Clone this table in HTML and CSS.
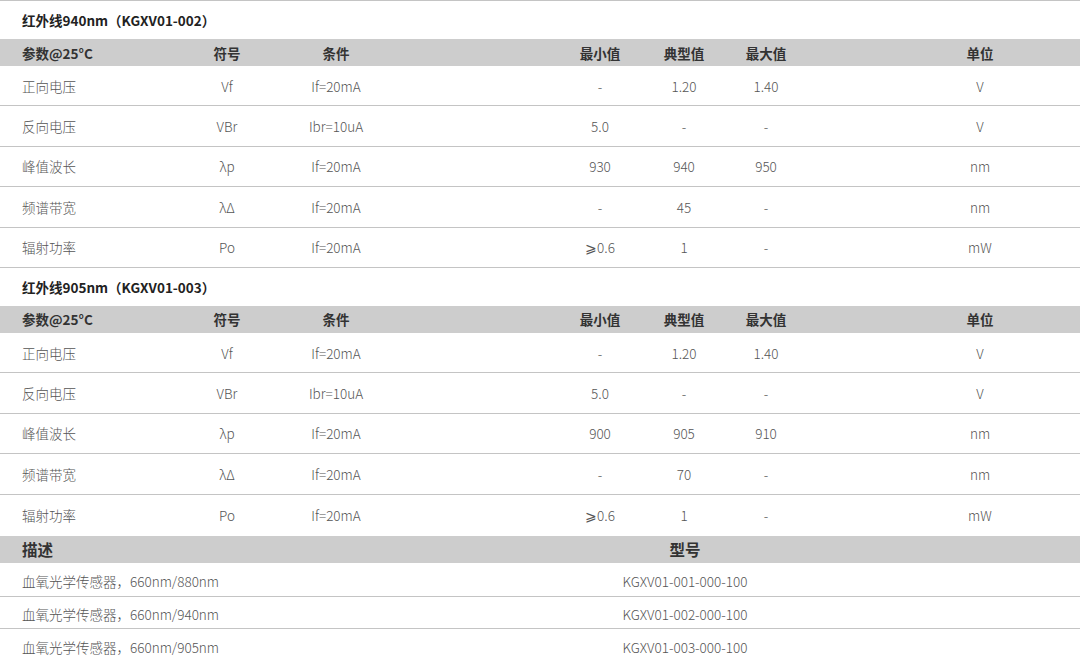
FILE: index.html
```html
<!DOCTYPE html>
<html lang="zh-CN">
<head>
<meta charset="utf-8">
<link rel="stylesheet" href="styles.css">
</head>
<body>
<div class="page">
  <section class="spec">
    <div class="title">红外线940nm（KGXV01-002）</div>
    <div class="grid head">
      <div class="c1">参数@25°C</div><div class="c2">符号</div><div class="c3">条件</div><div class="c4">最小值</div><div class="c5">典型值</div><div class="c6">最大值</div><div class="c7">单位</div>
    </div>
    <div class="grid row">
      <div class="c1">正向电压</div><div class="c2">Vf</div><div class="c3">If=20mA</div><div class="c4">-</div><div class="c5">1.20</div><div class="c6">1.40</div><div class="c7">V</div>
    </div>
    <div class="grid row">
      <div class="c1">反向电压</div><div class="c2">VBr</div><div class="c3">Ibr=10uA</div><div class="c4">5.0</div><div class="c5">-</div><div class="c6">-</div><div class="c7">V</div>
    </div>
    <div class="grid row">
      <div class="c1">峰值波长</div><div class="c2">λp</div><div class="c3">If=20mA</div><div class="c4">930</div><div class="c5">940</div><div class="c6">950</div><div class="c7">nm</div>
    </div>
    <div class="grid row">
      <div class="c1">频谱带宽</div><div class="c2">λΔ</div><div class="c3">If=20mA</div><div class="c4">-</div><div class="c5">45</div><div class="c6">-</div><div class="c7">nm</div>
    </div>
    <div class="grid row">
      <div class="c1">辐射功率</div><div class="c2">Po</div><div class="c3">If=20mA</div><div class="c4">⩾0.6</div><div class="c5">1</div><div class="c6">-</div><div class="c7">mW</div>
    </div>
  </section>
  <section class="spec">
    <div class="title">红外线905nm（KGXV01-003）</div>
    <div class="grid head">
      <div class="c1">参数@25°C</div><div class="c2">符号</div><div class="c3">条件</div><div class="c4">最小值</div><div class="c5">典型值</div><div class="c6">最大值</div><div class="c7">单位</div>
    </div>
    <div class="grid row">
      <div class="c1">正向电压</div><div class="c2">Vf</div><div class="c3">If=20mA</div><div class="c4">-</div><div class="c5">1.20</div><div class="c6">1.40</div><div class="c7">V</div>
    </div>
    <div class="grid row">
      <div class="c1">反向电压</div><div class="c2">VBr</div><div class="c3">Ibr=10uA</div><div class="c4">5.0</div><div class="c5">-</div><div class="c6">-</div><div class="c7">V</div>
    </div>
    <div class="grid row">
      <div class="c1">峰值波长</div><div class="c2">λp</div><div class="c3">If=20mA</div><div class="c4">900</div><div class="c5">905</div><div class="c6">910</div><div class="c7">nm</div>
    </div>
    <div class="grid row">
      <div class="c1">频谱带宽</div><div class="c2">λΔ</div><div class="c3">If=20mA</div><div class="c4">-</div><div class="c5">70</div><div class="c6">-</div><div class="c7">nm</div>
    </div>
    <div class="grid row last">
      <div class="c1">辐射功率</div><div class="c2">Po</div><div class="c3">If=20mA</div><div class="c4">⩾0.6</div><div class="c5">1</div><div class="c6">-</div><div class="c7">mW</div>
    </div>
  </section>
  <section class="models">
    <div class="mgrid mhead"><div class="d">描述</div><div class="m">型号</div></div>
    <div class="mgrid mrow first"><div class="d">血氧光学传感器，660nm/880nm</div><div class="m">KGXV01-001-000-100</div></div>
    <div class="mgrid mrow"><div class="d">血氧光学传感器，660nm/940nm</div><div class="m">KGXV01-002-000-100</div></div>
    <div class="mgrid mrow last"><div class="d">血氧光学传感器，660nm/905nm</div><div class="m">KGXV01-003-000-100</div></div>
  </section>
</div>
</body>
</html>
```

FILE: styles.css
```css
html, body {
  margin: 0;
  padding: 0;
  background: #fff;
}
body {
  font-family: "Noto Sans CJK SC", "Noto Sans", sans-serif;
  font-size: 13.5px;
  color: #555;
  font-weight: 300;
}
.page {
  width: 1080px;
  height: 661px;
  overflow: hidden;
  border-top: 1px solid #c4c4c4;
  box-sizing: border-box;
}
.title {
  height: 38px;
  display: flex;
  align-items: center;
  padding-left: 22px;
  font-weight: 700;
  color: #222;
  font-size: 13.5px;
}
.grid {
  display: grid;
  grid-template-columns: 170px 114px 104px 170px 84px 84px 80px 74px 200px;
  align-items: center;
}
.c1 { grid-column: 1; padding-left: 22px; }
.c2 { grid-column: 2; text-align: center; }
.c3 { grid-column: 3; text-align: center; }
.c4 { grid-column: 5; text-align: center; }
.c5 { grid-column: 6; text-align: center; }
.c6 { grid-column: 7; text-align: center; }
.c7 { grid-column: 9; text-align: center; }
.head {
  height: 27px;
  background: #cdcdcd;
  font-weight: 700;
  color: #333;
}
.row {
  height: 39.4px;
  border-bottom: 1px solid #c4c4c4;
}
.row.last {
  height: 41px;
  border-bottom: none;
}
.mgrid {
  display: grid;
  grid-template-columns: 570px 230px 1fr;
  align-items: center;
}
.mgrid .d { padding-left: 22px; }
.mgrid .m { text-align: center; }
.mhead {
  height: 27px;
  background: #cdcdcd;
  font-weight: 700;
  color: #333;
  font-size: 15.5px;
}
.mrow {
  box-sizing: border-box;
  height: 32px;
  padding-top: 4px;
  border-bottom: 1px solid #c4c4c4;
}
.mrow.first { height: 34px; }
.mrow.last { border-bottom: none; }
```
